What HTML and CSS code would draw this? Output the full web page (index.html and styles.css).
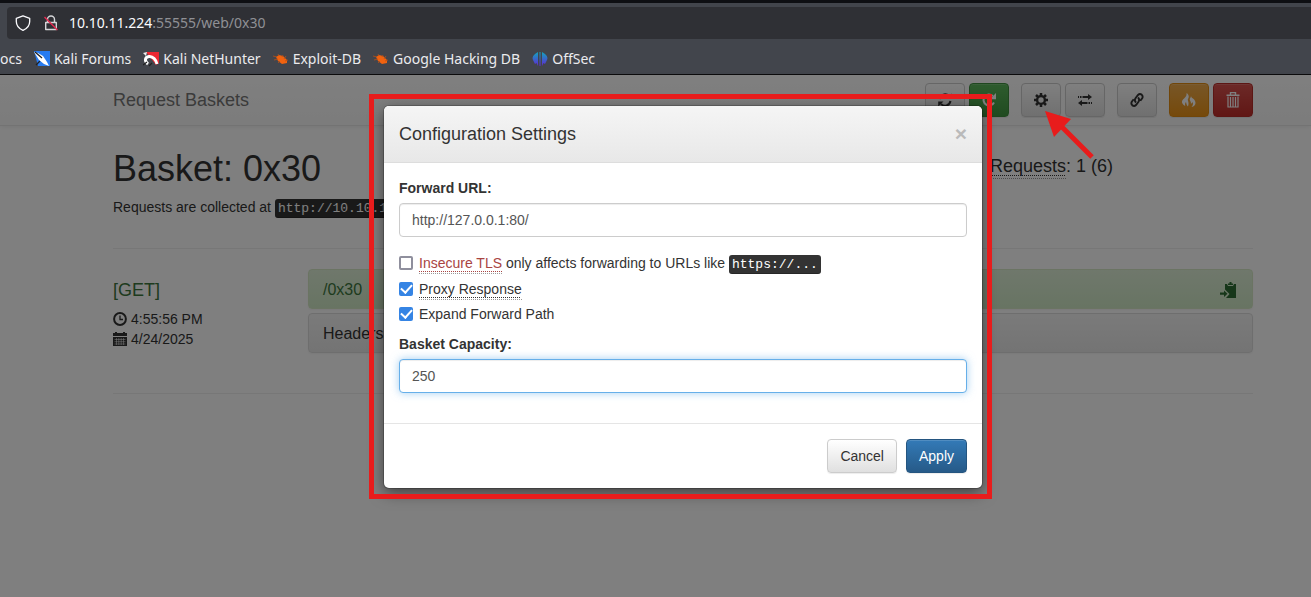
FILE: index.html
```html
<!DOCTYPE html>
<html lang="en">
<head>
<meta charset="utf-8">
<title>Request Baskets</title>
<link rel="stylesheet" href="styles.css">
</head>
<body>
<header class="browser">
  <div class="urlbar">
    <svg class="url-icon" viewBox="0 0 16 16" fill="none" stroke="#fbfbfe" stroke-width="1.3" stroke-linejoin="round"><path d="M8 .800 14.700 3.300V6.500C14.700 10.500 11.500 13.800 8 15.400 4.500 13.800 1.300 10.500 1.300 6.500V3.300Z"/></svg>
    <svg class="url-icon" viewBox="0 0 16 16" fill="none"><path d="M4.500 7.500V4.500a3.500 3.500 0 0 1 7 0V7.500M2.700 7.500H13.300V14.500H2.700Z" stroke="#d5d5d8" stroke-width="1.400" stroke-linejoin="round"/><path d="M1.500 2 14.500 15" stroke="#e22850" stroke-width="1.500"/></svg>
    <span class="url"><span class="host">10.10.11.224</span>:55555/web/0x30</span>
  </div>
  <nav class="bookmarks">
    <a href="#">ocs</a>
    <a href="#"><svg viewBox="0 0 16 16"><path d="M0 0H16V15H4Z" fill="#277bf0"/><path d="M0 1 4 2 9 5 13 11 15 15 10 13 5 9Z" fill="#fff"/><path d="M1 1 8 7M2 14 6 10" stroke="#222" stroke-width="1.300"/></svg>Kali Forums</a>
    <a href="#"><svg viewBox="0 0 16 16"><path d="M3 1H16V12L13 14Z" fill="#ec2732"/><path d="M0 2 4 1 3 5Z" fill="#eee"/><path d="M5 13C1 10 2 6 6 5.500 10 5 13 9 14 13" fill="none" stroke="#fff" stroke-width="3"/><path d="M0 14 4 11M6 15 9 12" stroke="#222" stroke-width="1.200"/></svg>Kali NetHunter</a>
    <a href="#"><svg viewBox="0 0 16 16"><path d="M3 6 6 4 10 5 14 9 14 12 9 13 5 10Z" fill="#f0620f"/><path d="M0 5 4 6M5 3 6 5M1 9 5 8M5 12 7 10M10 4 9 6M13 5 11 8M15 9 12 10" stroke="#b94f17" stroke-width=".8"/></svg>Exploit-DB</a>
    <a href="#"><svg viewBox="0 0 16 16"><path d="M3 6 6 4 10 5 14 9 14 12 9 13 5 10Z" fill="#f0620f"/><path d="M0 5 4 6M5 3 6 5M1 9 5 8M5 12 7 10M10 4 9 6M13 5 11 8M15 9 12 10" stroke="#b94f17" stroke-width=".8"/></svg>Google Hacking DB</a>
    <a href="#"><svg viewBox="0 0 16 16"><defs><linearGradient id="off" x2="0" y2="1"><stop stop-color="#12a5bd"/><stop offset="1" stop-color="#6027d5"/></linearGradient></defs><path d="M6 1V15L4.500 12 3 13 1.500 10Q-1 6 3 3ZM7.500 1H8.500V15H7.500ZM10 1 13 3Q17 6 14.500 10L13 13 11.500 12 10 15Z" fill="url(#off)"/></svg>OffSec</a>
  </nav>
</header>

<div class="page">
  <nav class="navbar">
    <div class="container navbar-inner">
      <a class="brand" href="#">Request Baskets</a>
      <div class="toolbar">
        <div class="group">
          <button class="btn btn-default btn-icon" type="button" aria-label="Refresh"><svg viewBox="0 0 14 14" fill="none" stroke="currentColor" stroke-width="2"><path d="M1.500 6A5.500 5.500 0 0 1 11 3.200M12.500 8A5.500 5.500 0 0 1 3 10.800"/><path d="M13.800 .500V5.500H8.500ZM.200 13.500V8.500H5.500Z" fill="currentColor" stroke="none"/></svg></button>
          <button class="btn btn-success btn-icon" type="button" aria-label="Auto refresh"><svg viewBox="0 0 14 14" fill="none" stroke="currentColor" stroke-width="2"><path d="M12 9.500A5.500 5.500 0 1 1 10.800 3"/><path d="M14 0V6.200H7.800Z" fill="currentColor" stroke="none"/></svg></button>
        </div>
        <div class="group">
          <div class="pointed">
            <button class="btn btn-default btn-icon" type="button" aria-label="Settings"><svg viewBox="0 0 14 14" fill="none" stroke="currentColor"><circle cx="7" cy="7" r="3.900" stroke-width="2.400"/><path d="M7 0V3M7 11V14M0 7H3M11 7H14M2 2 4 4M10 10 12 12M2 12 4 10M10 4 12 2" stroke-width="2.500"/></svg></button>
            <svg class="arrow" viewBox="0 0 50 50"><path d="M15 14 47 46" stroke="#e81c1c" stroke-width="5"/><path d="M0 0 26 8 9 26Z" fill="#e81c1c"/></svg>
          </div>
          <button class="btn btn-default btn-icon" type="button" aria-label="Transfer"><svg viewBox="0 0 14 14" fill="currentColor"><path d="M0 3H1V5H0ZM2 3H3.500V5H2ZM4.500 3H10V1L14 4 10 7V5H4.500ZM14 9H13V11H14ZM12 9H10.500V11H12ZM9.500 9H4V7L0 10 4 13V11H9.500Z"/></svg></button>
        </div>
        <button class="btn btn-default btn-icon" type="button" aria-label="Link"><svg viewBox="0 0 14 14" fill="none" stroke="currentColor" stroke-width="1.900"><path d="M6 9.500Q4 7.500 5.500 5.300L8 2Q9.700 .300 11.600 1.600 13.300 3.200 12.200 5.200L10.300 7.800M8 4.500Q10 6.500 8.500 8.700L6 12Q4.300 13.700 2.400 12.400 .700 10.800 1.800 8.800L3.700 6.200"/></svg></button>
        <div class="group">
          <button class="btn btn-warning btn-icon" type="button" aria-label="Clear"><svg viewBox="0 0 14 14" fill="currentColor"><path d="M4.500 0C7.500 2 7 4.500 6 6 5.200 7.500 7.500 9 6 13.500 4.500 12.500 4.500 10.500 4 9 3 10 2.800 11.500 3.300 13 0 11.500-1 8.500 1 6.500 3 4.500 5 3 4.500 0ZM9 2.500C9 5 11 5 12.500 7 14.500 10 13.500 13 9.500 14 11 12.500 11.300 10.500 10.500 9 10 10 9.500 10.500 8.800 10.800 9.500 8 7 7.500 8 5.500 8.500 4.500 9 4 9 2.500Z"/></svg></button>
          <button class="btn btn-danger btn-icon" type="button" aria-label="Delete"><svg viewBox="0 0 14 16" fill="none" stroke="currentColor"><path d="M4.500 2.500V.600H9.500V2.500M.500 3.200H13.500" stroke-width="1.400"/><path d="M2 4.500V15H12V4.500M4.500 5V14.500M7 5V14.500M9.500 5V14.500" stroke-width="1.200"/></svg></button>
        </div>
      </div>
    </div>
  </nav>

  <main class="container">
    <div class="heading">
      <div>
        <h1>Basket: 0x30</h1>
        <p class="lead">Requests are collected at <kbd>http://10.10.11.224:55555/0x30</kbd></p>
      </div>
      <h4 class="total"><abbr title="Current requests count (Total count)">Requests</abbr>: 1 (6)</h4>
    </div>
    <hr>
    <div class="request">
      <div class="meta">
        <h4 class="method">[GET]</h4>
        <div class="stamp"><svg viewBox="0 0 14 14" fill="none" stroke="currentColor"><circle cx="7" cy="7" r="5.900" stroke-width="2"/><path d="M7 3.500V7.500H10" stroke-width="1.300"/></svg>4:55:56 PM</div>
        <div class="stamp"><svg viewBox="0 0 14 14" fill="currentColor"><path d="M0 1H2V0H4V1H10V0H12V1H14V4H0ZM0 5H14V14H0Z"/><path d="M1.500 7.500H12.500M1.500 9.700H12.500M1.500 12H12.500M3.500 6V13M5.800 6V13M8.200 6V13M10.500 6V13" stroke="#fff" stroke-width=".5"/></svg>4/24/2025</div>
      </div>
      <div class="panels">
        <div class="panel panel-success"><span>/0x30</span><svg viewBox="0 0 16 16" fill="#2f6f35"><path d="M5 2H7L8 4H13L14 2H16V16H6L9.500 12 5 7.500Z"/><path d="M8 3V1.500H9.500V0H11.500V1.500H13V3Z"/><path d="M0 10.500H4V8.500L7.500 11.800 4 15V12.800H0Z"/></svg></div>
        <div class="panel panel-default">Headers</div>
      </div>
    </div>
    <hr>
  </main>

  <div class="backdrop">
    <form class="modal" role="dialog" aria-labelledby="modal-title">
      <div class="modal-header">
        <h4 id="modal-title">Configuration Settings</h4>
        <button class="close" type="button" aria-label="Close">×</button>
      </div>
      <div class="modal-body">
        <label class="field-label" for="forward">Forward URL:</label>
        <input class="field" id="forward" type="text" value="http://127.0.0.1:80/">
        <div class="checks">
          <div class="check"><input type="checkbox" id="tls"><label for="tls"><abbr class="danger" title="Bypass certificate verification">Insecure TLS</abbr> only affects forwarding to URLs like <kbd>https://...</kbd></label></div>
          <div class="check"><input type="checkbox" id="proxy" checked><label for="proxy"><abbr title="Proxy the response back to the client">Proxy Response</abbr></label></div>
          <div class="check"><input type="checkbox" id="expand" checked><label for="expand">Expand Forward Path</label></div>
        </div>
        <label class="field-label" for="capacity">Basket Capacity:</label>
        <input class="field field-active" id="capacity" type="text" value="250">
      </div>
      <div class="modal-footer">
        <button class="btn btn-default" type="button">Cancel</button>
        <button class="btn btn-primary" type="button">Apply</button>
      </div>
      <div class="highlight"></div>
    </form>
  </div>
</div>
</body>
</html>
```

FILE: styles.css
```css
* { box-sizing: border-box; }

body {
  margin: 0;
  min-height: 100vh;
  display: flex;
  flex-direction: column;
  background: #fff;
  color: #333;
  font: 14px/20px "Liberation Sans", Arial, sans-serif;
}

h1, h4, p { margin: 0; font-weight: 400; }
h1 { font-size: 36px; line-height: 40px; }
h4 { font-size: 18px; line-height: 20px; }
hr { width: 100%; margin: 0; border: 0; border-top: 1px solid #eee; }

/* Browser chrome */
.browser {
  overflow: hidden;
  padding: 4px 0 0;
  border-top: 3px solid #0e0f13;
  border-bottom: 1px solid #0c0c0d;
  background: #42454c;
  color: #fbfbfe;
  font-family: "Noto Sans", sans-serif;
}
.urlbar {
  display: flex;
  align-items: center;
  height: 32px;
  margin-left: 7px;
  padding-left: 8px;
  gap: 12px;
  border-radius: 4px 0 0 4px;
  background: #2f3035;
}
.url-icon { width: 16px; height: 16px; }
.url { margin-left: -2px; color: #8f9095; font-size: 14px; }
.host { color: #fbfbfe; }
.bookmarks {
  display: flex;
  align-items: center;
  gap: 12px;
  height: 30px;
  margin-top: 5px;
  white-space: nowrap;
}
.bookmarks a {
  display: flex;
  align-items: center;
  gap: 4px;
  color: #ebebee;
  font-size: 14px;
  text-decoration: none;
}
.bookmarks svg { width: 16px; height: 16px; }

/* Page */
.page { position: relative; flex: 1; }
.container {
  width: 100%;
  max-width: 1195px;
  margin: 0 auto;
  padding-left: 55px;
}
.navbar {
  border-bottom: 1px solid #e7e7e7;
  background: linear-gradient(#fff, #f8f8f8);
  box-shadow: 0 1px 5px rgba(0, 0, 0, .075);
}
.navbar-inner {
  display: flex;
  align-items: center;
  justify-content: space-between;
  height: 50px;
}
.brand { color: #777; font-size: 18px; text-decoration: none; }
.toolbar { display: flex; gap: 12px; }
.group { display: flex; gap: 4px; }
.pointed { position: relative; }
.arrow {
  position: absolute;
  z-index: 3;
  top: 28px;
  left: 24px;
  width: 50px;
  height: 50px;
  pointer-events: none;
}

.btn {
  height: 34px;
  padding: 0 12px;
  border: 1px solid #ccc;
  border-radius: 4px;
  box-shadow: inset 0 1px 0 rgba(255, 255, 255, .15), 0 1px 1px rgba(0, 0, 0, .075);
  font: inherit;
  color: #fff;
}
.btn-icon { display: flex; align-items: center; justify-content: center; width: 40px; }
.btn svg { flex: none; width: 14px; height: 14px; }
.btn-danger svg { height: 16px; }
.btn-default { background: linear-gradient(#fff, #e0e0e0); color: #333; }
.btn-success { background: linear-gradient(#5cb85c, #419641); border-color: #3e8f3e; }
.btn-warning { background: linear-gradient(#f0ad4e, #eb9316); border-color: #e38d13; }
.btn-danger { background: linear-gradient(#d9534f, #c12e2a); border-color: #b92c28; }
.btn-primary { background: linear-gradient(#337ab7, #265a88); border-color: #245580; }

.heading {
  display: grid;
  grid-template-columns: 1fr 263px;
  padding: 23px 0 31px;
}
.lead { margin-top: 8px; }
.total { margin-top: 7px; }
kbd {
  padding: 2px 3px;
  border-radius: 3px;
  background: #333;
  box-shadow: inset 0 -1px 0 rgba(0, 0, 0, .25);
  color: #fff;
  font: 13px "Liberation Mono", monospace;
}
abbr {
  padding-bottom: 2px;
  border-bottom: 1px dotted #999;
  text-decoration: underline dotted 1px;
  text-decoration-skip-ink: none;
  text-underline-offset: 3px;
}

.request { display: flex; padding: 20px 0 40px; }
.meta { width: 195px; padding-top: 11px; }
.method { margin-bottom: 9px; color: #3c763d; }
.stamp { display: flex; align-items: center; gap: 4px; }
.stamp svg { width: 14px; height: 14px; }
.panels { flex: 1; display: grid; gap: 4px; }
.panel {
  display: flex;
  align-items: center;
  justify-content: space-between;
  padding: 10px 14px 8px;
  border: 1px solid #ddd;
  border-radius: 4px;
  box-shadow: 0 1px 2px rgba(0, 0, 0, .05);
  font-size: 16px;
}
.panel-success {
  padding-right: 16px;
  border-color: #d6e9c6;
  background: linear-gradient(#dff0d8, #d0e9c6);
  color: #3c763d;
}
.panel-default { background: linear-gradient(#f5f5f5, #e8e8e8); }
.panel svg { width: 16px; height: 16px; }

/* Modal */
.backdrop {
  position: absolute;
  z-index: 2;
  inset: 0;
  padding: 31px 0 0 55px;
  background: rgba(0, 0, 0, .5);
}
.modal {
  position: relative;
  max-width: 598px;
  margin: 0 auto;
  border-radius: 5px;
  background: #fff;
  box-shadow: 0 0 0 1px rgba(0, 0, 0, .2), 0 5px 15px rgba(0, 0, 0, .5);
}
.modal-header {
  display: flex;
  align-items: center;
  justify-content: space-between;
  height: 57px;
  padding: 0 15px;
  border-bottom: 1px solid #ddd;
  border-radius: 5px 5px 0 0;
  background: linear-gradient(#f5f5f5, #e8e8e8);
}
.close {
  padding: 0;
  border: 0;
  background: none;
  color: #bababa;
  font: bold 21px/20px "Liberation Sans", Arial, sans-serif;
}
.modal-body { padding: 15px 15px 30px; }
.field-label { display: block; margin-bottom: 5px; font-weight: 700; }
.field {
  display: block;
  width: 100%;
  height: 34px;
  padding: 0 12px;
  border: 1px solid #ccc;
  border-radius: 4px;
  box-shadow: inset 0 1px 1px rgba(0, 0, 0, .075);
  color: #555;
  font: inherit;
}
.field-active {
  border-color: #66afe9;
  box-shadow: inset 0 1px 1px rgba(0, 0, 0, .075), 0 0 8px rgba(102, 175, 233, .6);
}
.checks { display: grid; gap: 5px; margin: 16px 0 10px; }
.check { display: flex; align-items: center; gap: 6px; }
.check:nth-child(2) { min-height: 21px; }
.check input {
  appearance: none;
  display: grid;
  place-content: center;
  width: 14px;
  height: 14px;
  margin: 0;
  border: 2px solid #8f8f9d;
  border-radius: 2px;
}
.check input:checked { border-color: #3584e4; background: #3584e4; }
.check input:checked::before {
  content: "";
  width: 5px;
  height: 9px;
  margin-bottom: 3px;
  border: solid #fff;
  border-width: 0 2px 2px 0;
  transform: rotate(42deg);
}
.danger { color: #a94442; }
.modal-footer {
  display: flex;
  justify-content: flex-end;
  gap: 9px;
  padding: 15px;
  border-top: 1px solid #e5e5e5;
}

/* Marker frame around the dialog */
.highlight {
  position: absolute;
  inset: -12px -10px -11px -15px;
  border: 5px solid #e81c1c;
  pointer-events: none;
}
```
